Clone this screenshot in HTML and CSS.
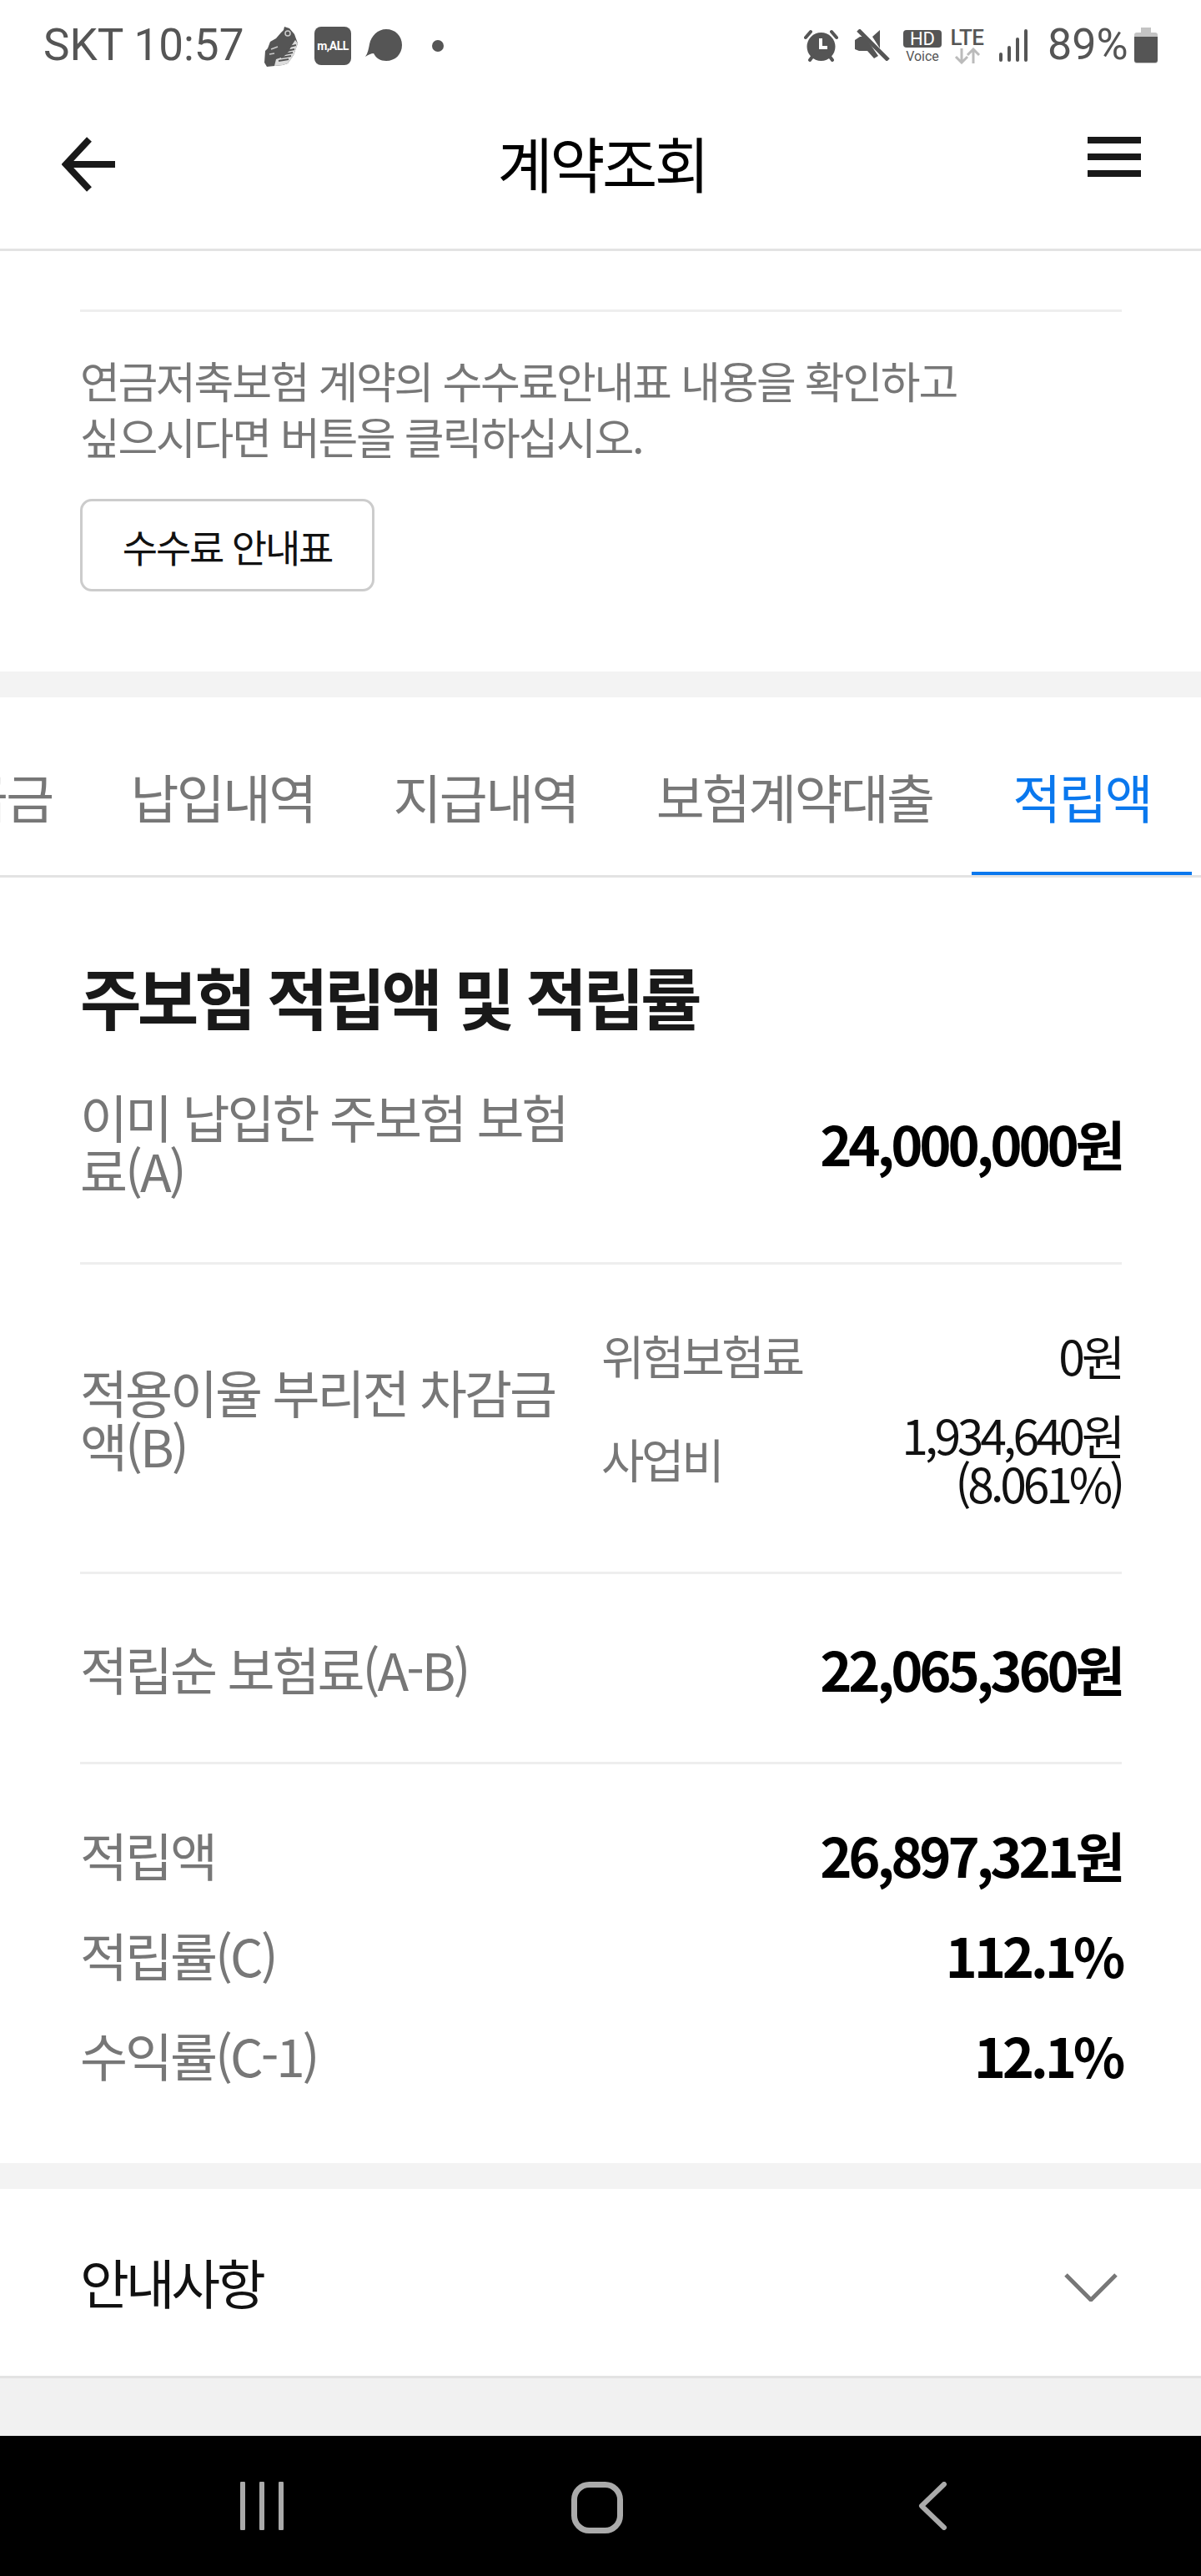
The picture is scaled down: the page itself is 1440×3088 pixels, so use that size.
FILE: index.html
```html
<!DOCTYPE html>
<html lang="ko">
<head>
<meta charset="utf-8">
<title>계약조회</title>
<link rel="stylesheet" href="styles.css">
</head>
<body>
<div class="status">
  <div class="status-left">
    <span class="clock">SKT 10:57</span>
    <svg class="ic-shoe" viewBox="0 0 40 48"><path fill="#555" d="M24 0l6 2 6 7 4 11-5 14-7 10-6 2-19 2-3-5 1-14 3-3 3-8 7-4 6-7 3-3z"/><path fill="#ddd" d="M37 16l3 4-5 14-7 10-6 2-10 1 2-8 9-3 6-6 4-8z"/><path stroke="#555" stroke-width="2" fill="none" d="M30 24l8-2M27 29l9-2M24 33l10-2M20 37l12-2M17 41l12-2"/><circle cx="28" cy="8" r="3" fill="none" stroke="#ccc" stroke-width="1.500"/><path d="M8 27l8-3M6 33l6-1" stroke="#ccc" stroke-width="1.500"/></svg>
    <span class="ic-mall">m,ALL</span>
    <svg class="ic-bubble" viewBox="0 0 44 38"><path fill="#555" d="M25 0c11 0 19 8 19 19s-8 19-19 19c-7 0-12-3-15-9-3 0-7 2-10 4 3-4 4-10 5-15C7 8 15 0 25 0z"/></svg>
    <span class="ic-dot"></span>
  </div>
  <div class="status-right">
    <svg class="ic-alarm" viewBox="0 0 41 39"><circle cx="20.500" cy="21" r="17" fill="#555"/><path d="M2 10l6-7M39 10l-6-7M7 37l3-4M34 37l-3-4" stroke="#555" stroke-width="4" stroke-linecap="round"/><path d="M20 11v11h8" fill="none" stroke="#fff" stroke-width="4"/></svg>
    <svg class="ic-mute" viewBox="0 0 42 38"><path fill="#555" d="M0 13l6-4 5 0 8 10 9 13-5 3-8-9-10 0-5-2zM21 9l9-8v22z"/><path d="M4 1l36 36" stroke="#555" stroke-width="5"/></svg>
    <div class="hd"><span class="hd-box">HD</span><span class="hd-voice">Voice</span></div>
    <div class="lte"><span class="lte-text">LTE</span><svg class="ic-updown" viewBox="0 0 32 20"><path d="M9 1v17M2 11l7 7 7-7M23 19V2M16 9l7-7 7 7" fill="none" stroke="#bbb" stroke-width="3"/></svg></div>
    <svg class="ic-signal" viewBox="0 0 36 39"><path d="M3 30v7M13 22v15M23 12v25M33 2v35" stroke="#555" stroke-width="4" stroke-linecap="round"/></svg>
    <span class="battery-text">89%</span>
    <svg class="ic-battery" viewBox="0 0 28 43"><path fill="#c4c4c4" d="M8 0h12v6h5a3 3 0 0 1 3 3v31a3 3 0 0 1-3 3H3a3 3 0 0 1-3-3V9a3 3 0 0 1 3-3h5z"/><path fill="#555" d="M0 11h28v28a3 3 0 0 1-3 3H3a3 3 0 0 1-3-3z"/></svg>
  </div>
</div>

<header class="appbar">
  <svg class="ic-back" viewBox="0 0 66 66"><path d="M64 33H6M33 3L5 33l28 30" fill="none" stroke="#191919" stroke-width="8"/></svg>
  <h1 class="appbar-title">계약조회</h1>
  <div class="ic-menu"><span></span><span></span><span></span></div>
</header>

<section class="notice">
  <div class="notice-line"></div>
  <p class="notice-text">연금저축보험 계약의 수수료안내표 내용을 확인하고<br>싶으시다면 버튼을 클릭하십시오.</p>
  <button class="notice-btn">수수료 안내표</button>
</section>

<div class="gap"></div>

<nav class="tabs">
  <span class="tab">해약환급금</span>
  <span class="tab">납입내역</span>
  <span class="tab">지급내역</span>
  <span class="tab">보험계약대출</span>
  <span class="tab tab-active">적립액</span>
</nav>

<main class="panel">
  <h2 class="panel-title">주보험 적립액 및 적립률</h2>
  <div class="row row-a">
    <div class="label">이미 납입한 주보험 보험료(A)</div>
    <div class="amount">24,000,000원</div>
  </div>
  <div class="row row-b">
    <div class="label">적용이율 부리전 차감금액(B)</div>
    <div class="subs">
      <div class="sub sub-first"><span class="sub-name">위험보험료</span><span class="sub-val">0원</span></div>
      <div class="sub"><span class="sub-name">사업비</span><span class="sub-val">1,934,640원<br>(8.061%)</span></div>
    </div>
  </div>
  <div class="row row-c">
    <div class="label">적립순 보험료(A-B)</div>
    <div class="amount">22,065,360원</div>
  </div>
  <div class="totals">
    <div class="total"><div class="label">적립액</div><div class="amount">26,897,321원</div></div>
    <div class="total"><div class="label">적립률(C)</div><div class="amount">112.1%</div></div>
    <div class="total"><div class="label">수익률(C-1)</div><div class="amount">12.1%</div></div>
  </div>
</main>

<div class="gap gap-2"></div>

<section class="accordion">
  <span class="accordion-title">안내사항</span>
  <svg class="ic-chevron" viewBox="0 0 64 34"><path d="M2 2l30 30L62 2" fill="none" stroke="#777" stroke-width="5"/></svg>
</section>

<div class="footer-space"></div>

<div class="navbar">
  <svg class="ic-recents" viewBox="0 0 54 58"><path d="M4 2v54M27 2v54M50 2v54" stroke="#aaa" stroke-width="6" stroke-linecap="round"/></svg>
  <svg class="ic-home" viewBox="0 0 62 62"><rect x="3.500" y="3.500" width="55" height="55" rx="18" fill="none" stroke="#aaa" stroke-width="7"/></svg>
  <svg class="ic-navback" viewBox="0 0 36 58"><path d="M32 3L5 29l27 26" fill="none" stroke="#aaa" stroke-width="6" stroke-linecap="round" stroke-linejoin="round"/></svg>
</div>
</body>
</html>
```

FILE: styles.css
```css
* { box-sizing: border-box; }
html, body { margin: 0; padding: 0; }
body {
  width: 1440px;
  height: 3088px;
  overflow: hidden;
  background: #fff;
  color: #111;
  font-family: "Noto Sans CJK KR", "Noto Sans", sans-serif;
}

.status {
  height: 105px;
  display: flex;
  justify-content: space-between;
  align-items: flex-start;
  padding: 32px 52px 0 52px;
  color: #555;
  font-family: Roboto, sans-serif;
}
.status-left, .status-right { display: flex; align-items: flex-start; }
.clock { font-size: 53px; line-height: 44px; width: 265px; white-space: nowrap; }
.ic-shoe { width: 40px; height: 48px; }
.ic-mall {
  width: 44px; height: 46px; margin-left: 20px;
  background: #555; border-radius: 8px; color: #fff;
  font-size: 14px; font-weight: 700; text-align: center; line-height: 46px; letter-spacing: -.5px;
}
.ic-bubble { width: 44px; height: 38px; margin: 3px 0 0 17px; }
.ic-dot { width: 14px; height: 14px; margin: 16px 0 0 36px; border-radius: 50%; background: #555; }

.status-right { margin-top: 3px; }
.ic-alarm { width: 41px; height: 39px; margin-right: 20px; }
.ic-mute { width: 42px; height: 38px; margin-right: 16px; }
.hd { width: 46px; margin-right: 10px; display: flex; flex-direction: column; align-items: center; }
.hd-box { width: 46px; height: 21px; margin-top: 1px; background: #555; color: #fff; border-radius: 4px; font-size: 22px; line-height: 21px; text-align: center; }
.hd-voice { font-size: 16px; line-height: 16px; margin-top: 3px; white-space: nowrap; }
.lte { width: 41px; margin-right: 17px; display: flex; flex-direction: column; align-items: center; }
.lte-text { font-size: 26px; line-height: 20px; font-weight: 500; letter-spacing: -.5px; }
.ic-updown { width: 32px; height: 20px; margin-top: 2px; }
.ic-signal { width: 36px; height: 39px; margin-right: 23px; }
.battery-text { font-size: 52px; line-height: 44px; width: 104px; margin-top: -3px; white-space: nowrap; }
.ic-battery { width: 28px; height: 43px; margin-top: -2px; }

.appbar {
  height: 196px;
  display: flex;
  align-items: flex-start;
  justify-content: space-between;
  padding: 59px 72px 0 74px;
  border-bottom: 3px solid #e3e3e3;
}
.ic-back { width: 66px; height: 66px; }
.appbar-title { margin: -10px 0 0 0; font-size: 72px; line-height: 80px; font-weight: 400; color: #000; letter-spacing: -3.5px; }
.ic-menu { width: 64px; display: flex; flex-direction: column; gap: 12px; }
.ic-menu span { display: block; height: 8px; background: #191919; }

.notice { height: 504px; padding: 70px 95px 0 96px; }
.notice-line { height: 3px; background: #eee; }
.notice-text { margin: 48px 0 0; font-size: 52px; line-height: 67px; color: #777; letter-spacing: -2.3px; }
.notice-btn {
  display: block; width: 353px; height: 111px; margin-top: 42px; padding: 0;
  background: #fff; border: 3px solid #ccc; border-radius: 14px;
  font-family: inherit; font-size: 46px; color: #111; letter-spacing: -2.2px;
}

.gap { height: 31px; background: #f3f3f3; }

.tabs {
  height: 216px;
  display: flex;
  justify-content: flex-end;
  padding-right: 11px;
  overflow: hidden;
  border-bottom: 3px solid #e3e3e3;
}
.tab {
  flex: none;
  padding: 78px 47px 0;
  font-size: 63px;
  line-height: 80px;
  color: #777;
  letter-spacing: -2.700px;
  white-space: nowrap;
}
.tab-active { padding: 78px 49px 0; color: #0a78ee; border-bottom: 4px solid #0a78ee; height: 213px; }

.panel { height: 1541px; padding: 0 95px 0 96px; }
.panel-title { margin: 0; padding-top: 91px; font-size: 80px; line-height: 100px; font-weight: 700; color: #191919; letter-spacing: -4.8px; }
.row { display: flex; justify-content: space-between; align-items: center; border-bottom: 3px solid #eee; }
.label { width: 610px; font-size: 62px; line-height: 64px; color: #777; letter-spacing: -3px; word-break: break-all; }
.amount { font-size: 65px; line-height: 70px; font-weight: 700; color: #000; letter-spacing: -4.3px; white-space: nowrap; }
.row-a { height: 274px; padding-bottom: 16px; margin-top: -1px; }
.row-b { height: 371px; }
.row-c { height: 228px; }
.subs { width: 624px; }
.sub { display: flex; justify-content: space-between; align-items: center; }
.sub-first { margin-bottom: 36px; }
.sub-name { font-size: 56px; line-height: 60px; color: #777; letter-spacing: -3.4px; }
.sub-val { font-size: 57px; line-height: 58px; color: #111; letter-spacing: -4.2px; text-align: right; }
.totals { padding-top: 68px; display: flex; flex-direction: column; gap: 40px; }
.total { display: flex; justify-content: space-between; align-items: center; height: 80px; }

.gap-2 { height: 31px; }

.accordion {
  height: 227px;
  display: flex;
  align-items: center;
  justify-content: space-between;
  padding: 0 100px 0 96px;
  border-bottom: 3px solid #e3e3e3;
}
.accordion-title { font-size: 64px; line-height: 80px; margin-top: -4px; color: #111; letter-spacing: -4.2px; }
.ic-chevron { width: 64px; height: 34px; margin-top: 12px; }

.footer-space { height: 69px; background: #f1f1f1; }

.navbar { height: 168px; background: #000; display: flex; align-items: flex-start; padding-top: 55px; }
.ic-recents { width: 54px; height: 58px; margin-left: 287px; }
.ic-home { width: 62px; height: 62px; margin-left: 344px; }
.ic-navback { width: 36px; height: 58px; margin-left: 353px; }
```
